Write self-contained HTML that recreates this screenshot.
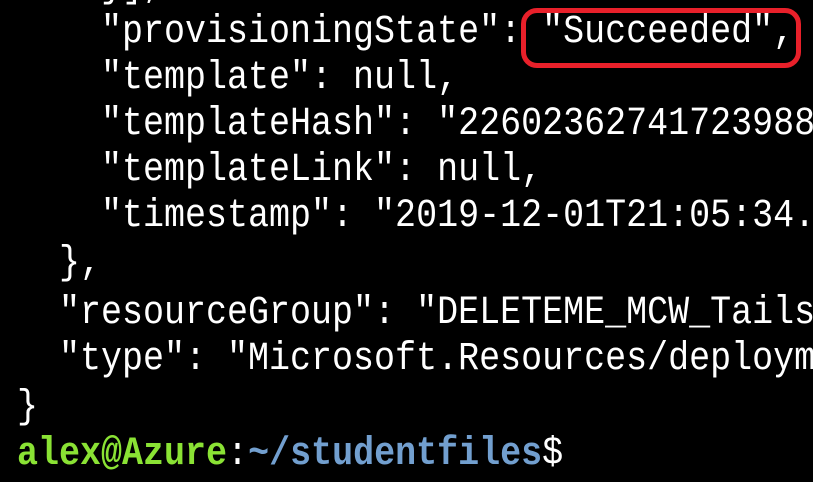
<!DOCTYPE html>
<html><head><meta charset="utf-8"><style>
html,body{margin:0;padding:0;background:#000;width:813px;height:482px;overflow:hidden}
.l{position:absolute;left:17px;white-space:pre;font-family:"Liberation Mono",monospace;font-size:35px;line-height:46px;height:46px;color:#fff;transform:scaleY(1.15);transform-origin:50% 55%}
.g{color:#8ae234;font-weight:bold}.b{color:#729fcf;font-weight:bold}
.box{position:absolute;left:521px;top:8px;width:270px;height:50px;border:5px solid #e8202a;border-radius:16px}
</style></head><body>
<div class="l" style="top:-37px">    }],</div>
<div class="l" style="top:9px">    "provisioningState": "Succeeded",</div>
<div class="l" style="top:55px">    "template": null,</div>
<div class="l" style="top:101px">    "templateHash": "22602362741723988</div>
<div class="l" style="top:147px">    "templateLink": null,</div>
<div class="l" style="top:193px">    "timestamp": "2019-12-01T21:05:34.</div>
<div class="l" style="top:240px">  },</div>
<div class="l" style="top:290px">  "resourceGroup": "DELETEME_MCW_Tails</div>
<div class="l" style="top:336px">  "type": "Microsoft.Resources/deploym</div>
<div class="l" style="top:384px">}</div>
<div class="l" style="top:431px"><span class="g">alex@Azure</span>:<span class="b">~/studentfiles</span>$</div>
<div class="box"></div>
</body></html>
